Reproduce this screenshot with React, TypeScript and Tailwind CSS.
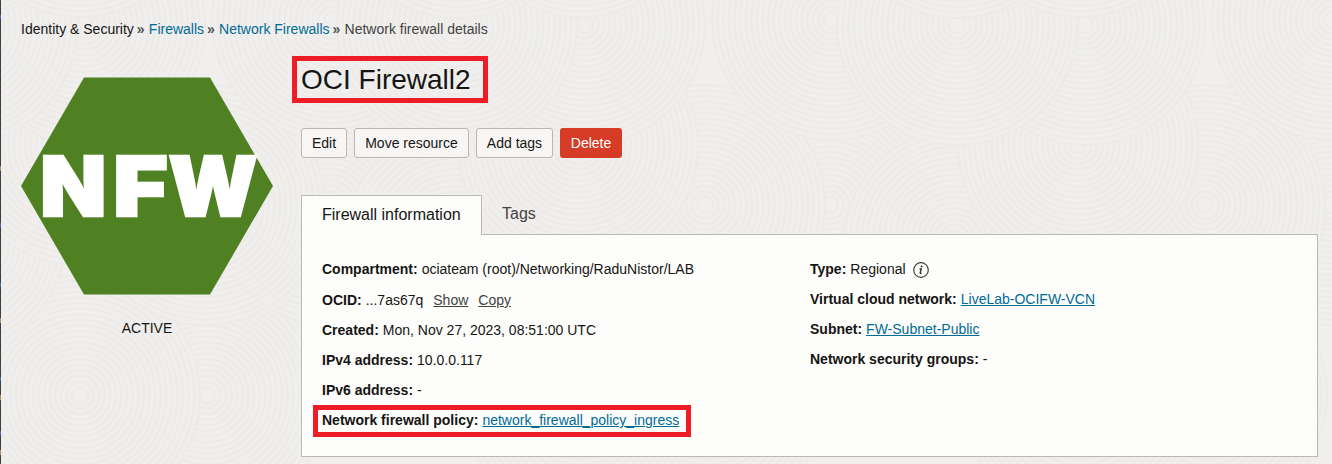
import React from "react";

const tile: [number, number, number][] = [
  [207, 395, 120], [80, 395, 120], [330, 205, 120], [205, 205, 120], [-45, 240, 110],
  [78, 145, 120], [332, 20, 120], [85, 25, 120], [457, 25, 120], [80, -100, 117], [457, -100, 118],
];

function Texture() {
  return (
    <svg className="absolute inset-0 -z-10" width="1332" height="464">
      <rect width="1332" height="464" fill="#f0efed" />
      {tile.map(([x, y, r], i) => (
        <g key={i} fill="none" stroke="#ecebea" strokeWidth="2">
          {[-500, 0, 500, 1000].map((dx) => (
            <g key={dx}>
              <circle cx={x + dx} cy={y} r={r} fill="#f0efed" stroke="none" />
              {Array.from({ length: Math.floor(r / 5.6) }, (_, k) => (
                <circle key={k} cx={x + dx} cy={y} r={r - k * 5.6} />
              ))}
            </g>
          ))}
        </g>
      ))}
      <rect width="1" height="464" fill="#404043" />
      {[15, 223, 283, 377, 431].map((y) => (
        <rect key={y} y={y} width="1" height="4" fill="#3f6ea8" />
      ))}
      {[166, 318, 395, 450].map((y) => (
        <rect key={y} y={y} width="1" height="5" fill="#b08a58" />
      ))}
    </svg>
  );
}

const Sep = () => <span className="w-[15px] pl-[3px] text-[14px] font-bold text-[#555]">»</span>;
const link = "text-[#006b95]";
const btn = "h-[30px] rounded-[3px] border border-[#bbb7b1] bg-[#f7f6f4] text-center text-[14px] leading-[28px]";

function Row({ label, children }: { label: string; children: React.ReactNode }) {
  return (
    <div className="flex h-[30px] items-center whitespace-nowrap">
      <b className="mr-[4px]">{label}</b>
      {children}
    </div>
  );
}

export default function App() {
  return (
    <div className="relative isolate h-[464px] w-[1332px] overflow-hidden pl-[21px] font-['Liberation_Sans',Arial,sans-serif] text-[14px] leading-[20px] text-[#161513]">
      <Texture />
      <nav className="flex h-[56px] items-center whitespace-nowrap pt-[2px]">
        <span>Identity &amp; Security</span><Sep />
        <a className={link}>Firewalls</a><Sep />
        <a className={link}>Network Firewalls</a><Sep />
        <span className="text-[#45423f]">Network firewall details</span>
      </nav>
      <div className="flex">
        <aside className="w-[252px] pt-[21px] text-center">
          <svg width="252" height="218" viewBox="0 0 252 218">
            <polygon points="63,0.5 189,0.5 252,109 189,217.5 63,217.5 0,109" fill="#4f8122" />
            <g fill="#fff" stroke="#fff" strokeWidth="2.6" fontFamily="Inter" fontWeight="900" fontSize="83">
              <text x="19.2" y="138.6" textLength="66" lengthAdjust="spacingAndGlyphs">N</text>
              <text x="92.2" y="138.6" textLength="54.5" lengthAdjust="spacingAndGlyphs">F</text>
              <text x="147.5" y="138.6" textLength="89" lengthAdjust="spacingAndGlyphs">W</text>
            </g>
          </svg>
          <div className="pt-[23px]">ACTIVE</div>
        </aside>
        <main className="ml-[19px]">
          <h1 className="h-[47px] w-[196px] border-[5px] border-[#ee1c25] pl-[4px] text-[28px] leading-[37px] whitespace-nowrap">OCI Firewall2</h1>
          <div className="ml-[9px] mt-[25px] flex gap-[7px]">
            <button className={btn + " w-[46px]"}>Edit</button>
            <button className={btn + " w-[115px]"}>Move resource</button>
            <button className={btn + " w-[77px]"}>Add tags</button>
            <button className="h-[30px] w-[62px] rounded-[3px] bg-[#d63b25] text-center text-white">Delete</button>
          </div>
          <div className="relative z-10 ml-[9px] mt-[37px] flex h-[40px] text-[16px]">
            <div className="w-[181px] border border-b-0 border-[#bbb7b1] bg-[#fdfdfb] pl-[20px] leading-[38px]">Firewall information</div>
            <div className="pl-[20px] leading-[37px] text-[#45423f]">Tags</div>
          </div>
          <section className="-mt-px ml-[9px] flex h-[223px] w-[1017px] border border-[#bbb7b1] bg-[#fdfdfb]">
            <div className="w-[508px] pl-[20px] pt-[19px]">
              <Row label="Compartment:">ociateam (root)/Networking/RaduNistor/LAB</Row>
              <div className="h-px" />
              <Row label="OCID:">
                ...7as67q
                <u className="ml-[10px] text-[#45423f]">Show</u>
                <u className="ml-[10px] text-[#45423f]">Copy</u>
              </Row>
              <Row label="Created:">Mon, Nov 27, 2023, 08:51:00 UTC</Row>
              <Row label="IPv4 address:">10.0.0.117</Row>
              <Row label="IPv6 address:">-</Row>
              <div className="-ml-[9px] flex h-[32px] w-[378px] items-center border-[5px] border-[#ee1c25] pb-[2px] pl-[4px]">
                <Row label="Network firewall policy:"><u className={link}>network_firewall_policy_ingress</u></Row>
              </div>
            </div>
            <div className="pt-[19px]">
              <Row label="Type:">
                Regional
                <svg className="ml-[7px] mt-px" width="16" height="16" viewBox="0 0 16 16">
                  <circle cx="8" cy="8" r="7.3" fill="none" stroke="#454545" strokeWidth="1.2" />
                  <path d="M6.5 7h1.7l-1 4c-.1.5.6.3 1.2-.2" fill="none" stroke="#333" strokeWidth="1.4" />
                  <circle cx="8.6" cy="4.6" r="1" fill="#333" />
                </svg>
              </Row>
              <Row label="Virtual cloud network:"><u className={link}>LiveLab-OCIFW-VCN</u></Row>
              <Row label="Subnet:"><u className={link}>FW-Subnet-Public</u></Row>
              <Row label="Network security groups:">-</Row>
            </div>
          </section>
        </main>
      </div>
    </div>
  );
}
